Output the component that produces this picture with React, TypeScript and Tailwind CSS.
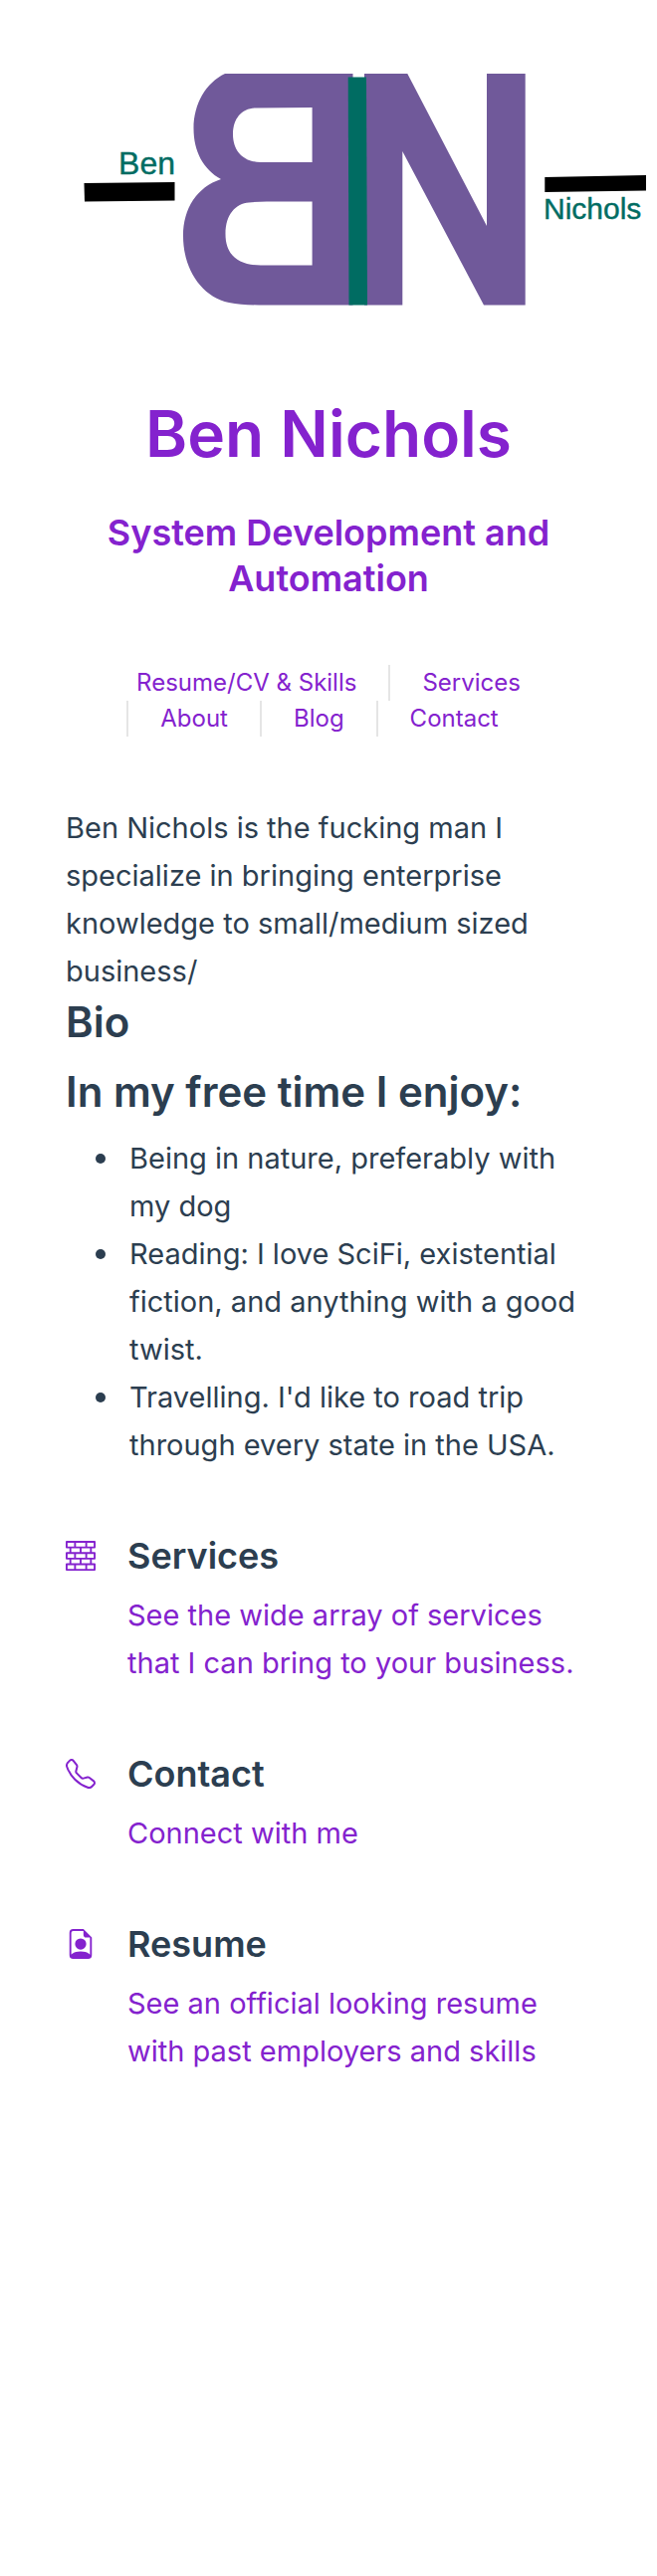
import { BsBricks, BsFileEarmarkPerson, BsTelephone } from "react-icons/bs";
import type { IconType } from "react-icons";

const navLinks = ["Resume/CV & Skills", "Services", "About", "Blog", "Contact"];

const hobbies = [
  "Being in nature, preferably with my dog",
  "Reading: I love SciFi, existential fiction, and anything with a good twist.",
  "Travelling. I'd like to road trip through every state in the USA.",
];

type Feature = { title: string; text: string; icon: IconType };

const features: Feature[] = [
  { title: "Services", text: "See the wide array of services that I can bring to your business.", icon: BsBricks },
  { title: "Contact", text: "Connect with me", icon: BsTelephone },
  { title: "Resume", text: "See an official looking resume with past employers and skills", icon: BsFileEarmarkPerson },
];

function Logo() {
  return (
    <svg viewBox="0 0 660 372" className="block w-full" role="img" aria-label="Ben Nichols logo">
      <g fill="#70599a">
        <path
          fillRule="evenodd"
          d="M354.500 74H226C207 83 194.500 104 194.500 129C194.500 152 204 170 222 180C198 188 184 209 184 237C184 270 202 298 230 304C240 306 252 306.500 266 306.500H354.500ZM313.600 108V163H262C245 163 234 152 234 135C234 119 243 108.500 257 108.500ZM313.600 202.500V266.500H262C240 266.500 226.500 257 226.500 235C226.500 215 237 204.500 250 203.500C256 202.800 262 202.500 268 202.500Z"
        />
        <path d="M366 74H409.300L489 227V74H527.700V306.500H486L404.300 152V306.500H366Z" />
      </g>
      <path fill="#006c62" d="M349.700 77.500H368L369 306.500H350.500Z" />
      <path d="M84.500 184L175.500 183V201.500L85 202.500Z" />
      <path d="M547.300 178L649 176V191.500L547.300 193Z" />
      <g fill="#006c62" stroke="#006c62" strokeWidth="0.4" fontFamily="Liberation Sans, Arial, sans-serif">
        <text x="176" y="175" textAnchor="end" fontSize="32">Ben</text>
        <text x="546" y="220" fontSize="30">Nichols</text>
      </g>
    </svg>
  );
}

export default function App() {
  return (
    <div className="min-h-screen bg-white font-[Inter,sans-serif] text-[29px] leading-[48px] text-[#2c3e50]">
      <header className="text-center text-[#8422ce]">
        <Logo />
        <div className="px-[10%]">
          <h1 className="pt-5 text-[64px] leading-[88px] font-semibold">Ben Nichols</h1>
          <h2 className="mt-8 text-[36px] leading-[46px] font-semibold">System Development and Automation</h2>
          <nav className="mt-16 flex flex-wrap justify-center text-[24px] leading-9">
            {navLinks.map((label, i) => (
              <a
                key={label}
                href="#"
                className={i === 0 ? "px-8" : "border-l-2 border-[#e5e5e5] px-8"}
              >
                {label}
              </a>
            ))}
          </nav>
        </div>
      </header>

      <main className="px-[10%] pt-[68px]">
        <p>
          Ben Nichols is the fucking man I specialize in bringing enterprise knowledge to small/medium sized business/
        </p>
        <h2 className="text-[42px] leading-[54px] font-semibold">Bio</h2>
        <h2 className="mt-4 text-[42px] leading-[54px] font-semibold">In my free time I enjoy:</h2>
        <ul className="mt-4 pl-[30px]">
          {hobbies.map((hobby) => (
            <li
              key={hobby}
              className="flex gap-6 before:mt-[19px] before:size-[10px] before:shrink-0 before:rounded-full before:bg-[#2c3e50]"
            >
              {hobby}
            </li>
          ))}
        </ul>

        <div className="mt-16 flex flex-col gap-16">
          {features.map(({ title, text, icon: Icon }) => (
            <section key={title} className="flex gap-8">
              <Icon className="mt-2 size-[30px] shrink-0 text-[#8422ce]" />
              <div>
                <h3 className="text-[36px] leading-[46px] font-semibold">{title}</h3>
                <a href="#" className="mt-[13px] block text-[#8422ce]">
                  {text}
                </a>
              </div>
            </section>
          ))}
        </div>
      </main>
    </div>
  );
}
